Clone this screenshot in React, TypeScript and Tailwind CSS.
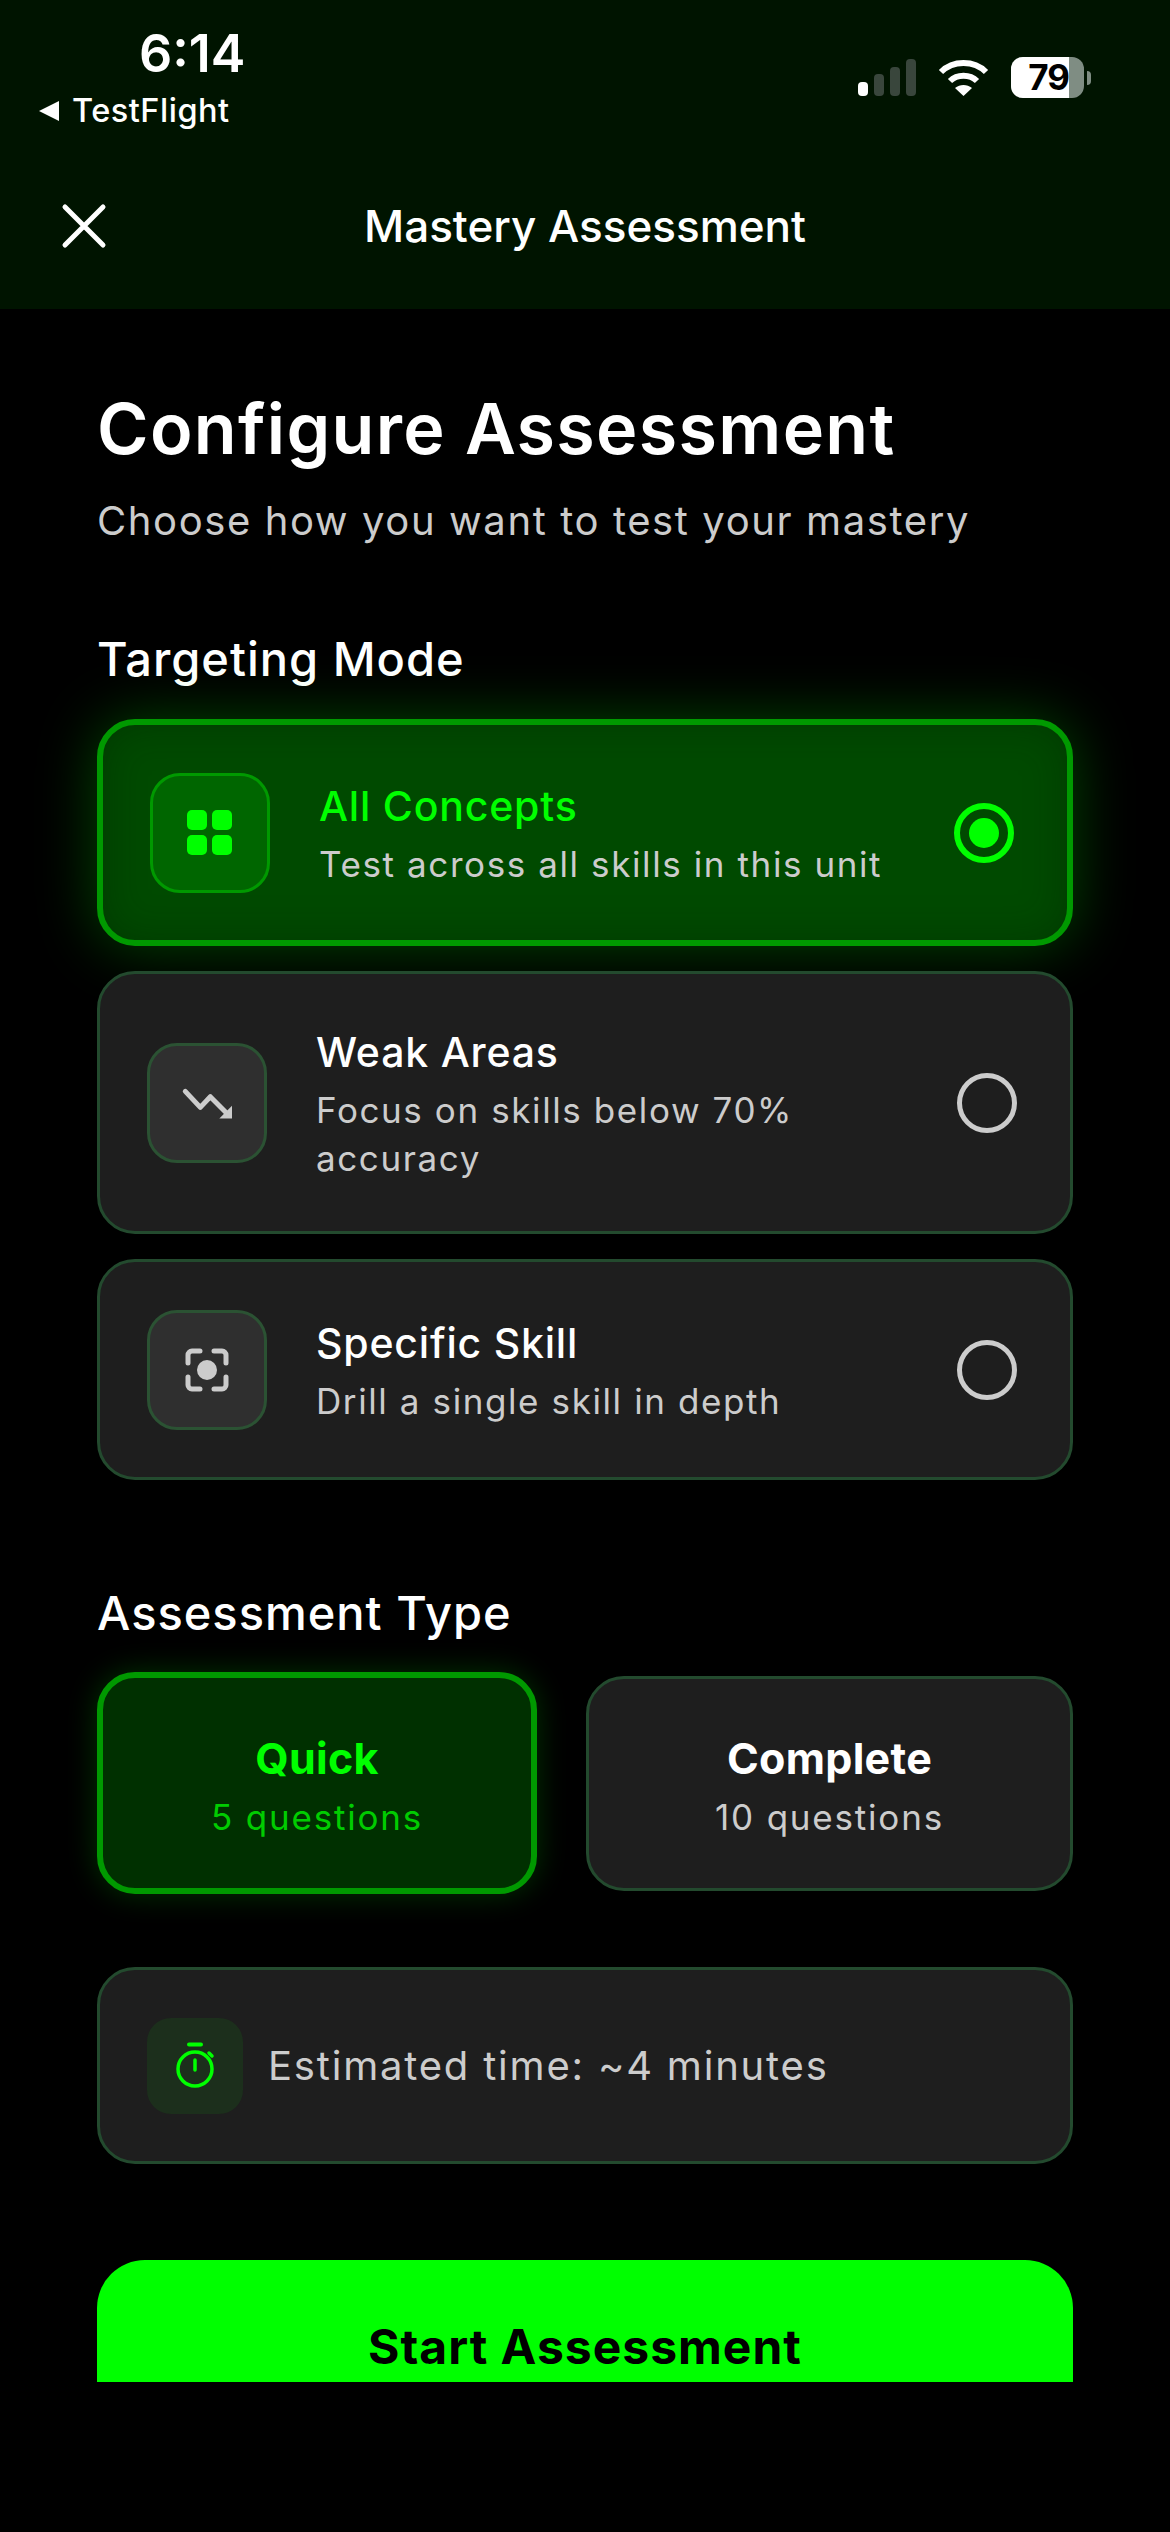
import React from "react";

const StatusBar = () => (
    <div className="flex justify-between h-[140px]">
        <div className="pl-[37px] pt-[28px]">
            <div className="pl-[102px] text-[52px] leading-[52px] font-semibold text-white">6:14</div>
            <div className="flex items-center gap-[11px] mt-[11px] text-[32.5px] leading-[40px] font-medium text-white tracking-[0.5px]">
                <svg width="24" height="22" viewBox="0 0 24 22"><path d="M22 1V21L2 11Z" fill="#fff"/></svg>
                TestFlight
            </div>
        </div>
        <div className="flex items-start gap-[22px] pt-[57px] pr-[79px]">
            <svg width="58" height="40" viewBox="0 0 58 40" className="mt-[1px]">
                <rect x="0" y="24" width="10" height="14" rx="4" fill="#fff"/>
                <rect x="16" y="16" width="10" height="22" rx="4" fill="#39463c"/>
                <rect x="32" y="9" width="10" height="29" rx="4" fill="#39463c"/>
                <rect x="48" y="1" width="10" height="37" rx="4" fill="#39463c"/>
            </svg>
            <svg width="51" height="38" viewBox="0 0 51 38" fill="none" stroke="#fff" className="mt-[2px]">
                <path d="M3 13C15 1 36 1 48 13" strokeWidth="6"/>
                <path d="M12 22C19 15 32 15 39 22" strokeWidth="6"/>
                <path d="M25.500 37L17 29C22 25 29 25 34 29Z" fill="#fff" stroke="none"/>
            </svg>
            <div className="flex items-center">
                <div className="w-[73px] h-[41px] rounded-[12px] overflow-hidden flex bg-[#7f8d83]">
                    <div className="w-[58px] h-full bg-white flex items-center justify-end text-[35px] leading-none font-bold text-black tracking-[-1px]">79</div>
                </div>
                <div className="w-[4px] h-[14px] ml-[3px] rounded-r-full bg-[#7f8d83]"/>
            </div>
        </div>
    </div>
);

const Header = () => (
    <div className="h-[309px] shrink-0 bg-[#001400] text-white">
        <StatusBar/>
        <div className="grid grid-cols-[1fr_auto_1fr] items-center mt-[46px] h-[80px]">
            <div className="pl-[60px]">
                <svg width="48" height="48" viewBox="0 0 48 48" stroke="#fff" strokeWidth="5" strokeLinecap="round">
                    <path d="M5 5L43 43M43 5L5 43"/>
                </svg>
            </div>
            <div className="text-[44px] leading-[56px] font-medium">Mastery Assessment</div>
            <div/>
        </div>
    </div>
);

const GridIcon = () => (
    <svg width="46" height="45" viewBox="0 0 46 45" fill="#00ff00">
        <rect x="0" y="0" width="20" height="20" rx="5"/>
        <rect x="25" y="0" width="20" height="20" rx="5"/>
        <rect x="0" y="25" width="20" height="20" rx="5"/>
        <rect x="25" y="25" width="20" height="20" rx="5"/>
    </svg>
);

const TrendIcon = () => (
    <svg width="56" height="56" viewBox="0 0 56 56" fill="none" stroke="#cccccc" strokeWidth="5" strokeLinecap="round" strokeLinejoin="round">
        <path d="M6.300 16.400L21.300 32.400L31.300 21.700L47 37.500"/>
        <path d="M53 30.700V43.400H40.300Z" fill="#cccccc" stroke="none"/>
    </svg>
);

const TargetIcon = () => (
    <svg width="48" height="48" viewBox="0 0 48 48" fill="none" stroke="#cccccc" strokeWidth="5" strokeLinecap="round">
        <path d="M5 17V9a4 4 0 0 1 4-4h8M31 5h8a4 4 0 0 1 4 4v8M43 31v8a4 4 0 0 1-4 4h-8M17 43H9a4 4 0 0 1-4-4v-8"/>
        <circle cx="24" cy="24" r="10" fill="#cccccc" stroke="none"/>
    </svg>
);

const TimerIcon = () => (
    <svg width="44" height="48" viewBox="0 0 44 48" fill="none" stroke="#00ff00" strokeWidth="3.500" strokeLinecap="round">
        <path d="M16 2.500H28" strokeWidth="4"/>
        <circle cx="22" cy="27" r="17"/>
        <path d="M22 18V28M36 11L39 14"/>
    </svg>
);

type OptionProps = {
    title: string;
    subtitle: string;
    icon: React.ReactNode;
    selected?: boolean;
};

const Option = ({title, subtitle, icon, selected}: OptionProps) => (
    <div className={selected
        ? "flex items-center rounded-[38px] border-[6px] border-[#009900] bg-[#004a00] shadow-[0_0_60px_rgba(0,255,0,0.28),inset_0_0_40px_rgba(0,30,0,0.35)] pl-[47px] pr-[53px] py-[47.5px]"
        : "flex items-center rounded-[38px] border-[3px] border-[#234a2e] bg-[#1e1e1e] pl-[47px] pr-[53px] py-[47.5px]"}>
        <div className={selected
            ? "w-[120px] h-[120px] shrink-0 rounded-[30px] border-[3px] border-[#009900] bg-[#006600] flex items-center justify-center"
            : "w-[120px] h-[120px] shrink-0 rounded-[30px] border-[3px] border-[#2b5233] bg-[#2f2f2f] flex items-center justify-center"}>
            {icon}
        </div>
        <div className="flex-1 pl-[49px] pr-[60px] pt-[2px] pb-[2px]">
            <div className={selected
                ? "text-[41px] leading-[56px] font-medium tracking-[0.8px] text-[#00ff00]"
                : "text-[41px] leading-[56px] font-medium tracking-[0.8px] text-white"}>{title}</div>
            <div className="text-[35px] leading-[48px] mt-[6px] tracking-[1.6px] text-[#cccccc]">{subtitle}</div>
        </div>
        {selected
            ? <div className="w-[60px] h-[60px] shrink-0 rounded-full border-[6px] border-[#00ff00] flex items-center justify-center">
                <div className="w-[30px] h-[30px] rounded-full bg-[#00ff00]"/>
            </div>
            : <div className="w-[60px] h-[60px] shrink-0 rounded-full border-[5px] border-[#cccccc]"/>}
    </div>
);

const App = () => {
    return (
        <div className="w-[1170px] h-[2532px] bg-black flex flex-col font-['Inter',sans-serif]">
            <Header/>
            <div className="h-[2073px] overflow-hidden px-[97px]">
                <h1 className="pt-[80px] text-[70px] leading-[80px] font-semibold tracking-[1.3px] text-white">Configure Assessment</h1>
                <p className="mt-[28px] text-[40px] leading-[48px] tracking-[1.6px] text-[#cccccc]">Choose how you want to test your mastery</p>

                <h2 className="mt-[86px] text-[47px] leading-[56px] font-medium tracking-[1px] text-white">Targeting Mode</h2>
                <div className="mt-[32px] flex flex-col gap-[25px]">
                    <Option selected title="All Concepts" subtitle="Test across all skills in this unit" icon={<GridIcon/>}/>
                    <Option title="Weak Areas" subtitle="Focus on skills below 70% accuracy" icon={<TrendIcon/>}/>
                    <Option title="Specific Skill" subtitle="Drill a single skill in depth" icon={<TargetIcon/>}/>
                </div>

                <h2 className="mt-[105px] text-[47px] leading-[56px] font-medium tracking-[1px] text-white">Assessment Type</h2>
                <div className="mt-[31px] grid grid-cols-[440px_487px] gap-[49px] items-center">
                    <div className="h-[222px] rounded-[38px] border-[6px] border-[#009900] bg-[#003000] shadow-[0_0_30px_rgba(0,255,0,0.2)] flex flex-col items-center justify-center pt-[4px]">
                        <div className="text-[43px] leading-[56px] font-bold tracking-[0.3px] text-[#00ff00]">Quick</div>
                        <div className="text-[35px] leading-[48px] mt-[7px] tracking-[1.8px] text-[#00cc00]">5 questions</div>
                    </div>
                    <div className="h-[215px] rounded-[38px] border-[3px] border-[#234a2e] bg-[#1e1e1e] flex flex-col items-center justify-center pt-[4px]">
                        <div className="text-[43px] leading-[56px] font-bold tracking-[0.3px] text-white">Complete</div>
                        <div className="text-[35px] leading-[48px] mt-[7px] tracking-[1.8px] text-[#cccccc]">10 questions</div>
                    </div>
                </div>

                <div className="mt-[73px] h-[197px] rounded-[38px] border-[3px] border-[#234a2e] bg-[#1e1e1e] flex items-center pl-[47px]">
                    <div className="w-[96px] h-[96px] rounded-[24px] bg-[#1c2f1c] flex items-center justify-center">
                        <TimerIcon/>
                    </div>
                    <div className="pl-[25px] text-[40px] leading-[48px] tracking-[1.8px] text-[#cccccc]">Estimated time: ~4 minutes</div>
                </div>

                <div className="mt-[96px] h-[174px] rounded-[48px] bg-[#00ff00] flex items-center justify-center text-[48px] leading-[56px] font-bold tracking-[1px] text-black">
                    Start Assessment
                </div>
            </div>
        </div>
    );
};

export default App;
